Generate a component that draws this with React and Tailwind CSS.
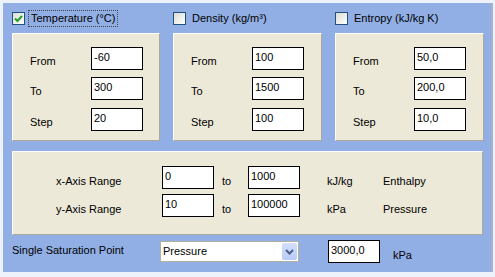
import React, { useState } from "react";

const font = { fontFamily: '"Liberation Sans", Arial, sans-serif' };

const Check = ({ checked }) => (
  <span className="flex h-[13px] w-[13px] shrink-0 items-center justify-center border border-[#1c5180] bg-gradient-to-br from-[#dcdcd6] to-white">
    {checked && (
      <svg width="9" height="9" viewBox="0 0 9 9">
        <path d="M1 4.5 L3.5 7 L8 2" stroke="#21a121" strokeWidth="2" fill="none" />
      </svg>
    )}
  </span>
);

const Field = ({ value, className = "" }) => (
  <div
    className={`h-[23px] w-[52px] border border-black bg-white px-[2px] pt-[3px] text-[11px] leading-[13px] text-black ${className}`}
  >
    {value}
  </div>
);

const RangePanel = ({ title, checked, width, rows, focus }) => (
  <div className={`flex flex-col ${width}`}>
    <div className="flex h-[17px] items-center gap-[3px]">
      <Check checked={checked} />
      <span
        className={`px-[2px] text-[11px] leading-[15px] ${
          focus ? "border border-dotted border-[#444]" : "border border-transparent"
        }`}
      >
        {title}
      </span>
    </div>
    <div className="mt-[6px] flex h-[108px] flex-col gap-[7px] border-t border-l border-white border-r border-b border-r-[#aca899] border-b-[#aca899] bg-[#ece9d8] pt-[13px] pl-[17px]">
      {rows.map(([label, value], i) => (
        <div key={label} className={`flex items-end ${i === 2 ? "mt-[1px]" : ""}`}>
          <span className="mb-[2px] w-[61px] text-[11px] leading-[13px]">{label}</span>
          <Field value={value} />
        </div>
      ))}
    </div>
  </div>
);

export default function App() {
  const [mode] = useState("Pressure");

  return (
    <div className="h-[277px] w-[495px] bg-[#eef2fb] pt-[3px] pl-[3px]" style={font}>
      <div className="flex h-[269px] w-[490px] flex-col border-r-2 border-r-[#a9b2c4] bg-[#92afe5] pl-[9px] pt-[7px] text-black">
        {/* Range panels */}
        <div className="flex gap-[13px]">
          <RangePanel
            title="Temperature (°C)"
            checked
            focus
            width="w-[148px]"
            rows={[["From", "-60"], ["To", "300"], ["Step", "20"]]}
          />
          <RangePanel
            title="Density (kg/m³)"
            width="w-[149px]"
            rows={[["From", "100"], ["To", "1500"], ["Step", "100"]]}
          />
          <RangePanel
            title="Entropy (kJ/kg K)"
            width="w-[149px]"
            rows={[["From", "50,0"], ["To", "200,0"], ["Step", "10,0"]]}
          />
        </div>

        {/* Axis ranges */}
        <div className="mt-[10px] flex h-[84px] w-[471px] flex-col gap-[5px] border-t border-l border-white border-r border-b border-r-[#aca899] border-b-[#aca899] bg-[#ece9d8] pt-[14px] pl-[43px]">
          {[
            ["x-Axis Range", "0", "1000", "kJ/kg", "Enthalpy"],
            ["y-Axis Range", "10", "100000", "kPa", "Pressure"],
          ].map(([label, a, b, unit, name]) => (
            <div key={label} className="flex items-end text-[11px] leading-[13px]">
              <span className="mb-[1px] w-[106px]">{label}</span>
              <Field value={a} />
              <span className="mb-[1px] ml-[8px] w-[26px]">to</span>
              <Field value={b} />
              <span className="mb-[1px] ml-[27px] w-[56px]">{unit}</span>
              <span className="mb-[1px]">{name}</span>
            </div>
          ))}
        </div>

        {/* Saturation point */}
        <div className="mt-[6px] flex items-start text-[11px] leading-[13px]">
          <span className="mt-[3px] w-[148px]">Single Saturation Point</span>
          <div className="flex h-[21px] w-[139px] items-center justify-between border border-[#b4b09e] bg-white pl-[2px] pr-[1px]">
            <span>{mode}</span>
            <span className="flex h-[17px] w-[15px] items-center justify-center rounded-[2px] bg-gradient-to-b from-[#d3e0fd] to-[#b7cbf8]">
              <svg width="9" height="6" viewBox="0 0 9 6">
                <path d="M1 1 L4.5 4.5 L8 1" stroke="#4d6185" strokeWidth="2" fill="none" />
              </svg>
            </span>
          </div>
          <Field value="3000,0" className="ml-[29px] mt-[-1px]" />
          <span className="ml-[13px] mt-[8px]">kPa</span>
        </div>
      </div>
    </div>
  );
}
